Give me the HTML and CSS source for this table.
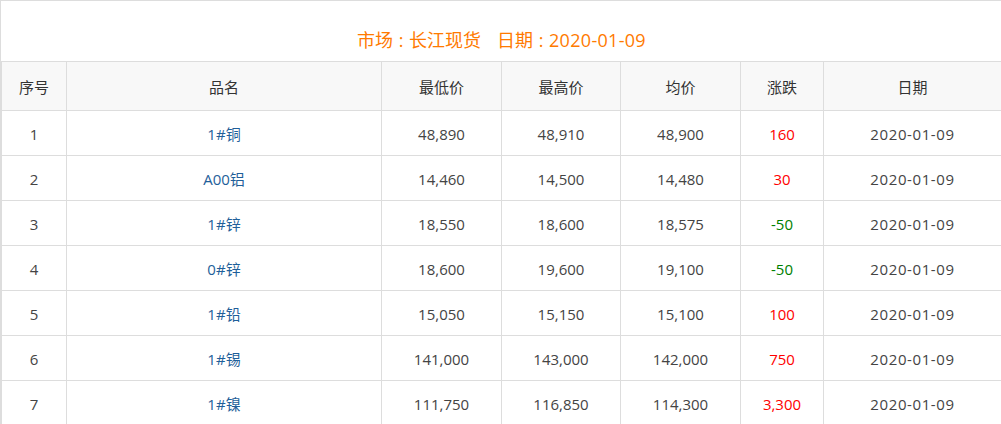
FILE: index.html
```html
<!DOCTYPE html>
<html lang="zh-CN">
<head>
<meta charset="utf-8">
<title>长江现货</title>
<link rel="stylesheet" href="styles.css">
</head>
<body>
<div class="board">
  <div class="title">市场<span class="colon">:</span>长江现货<span class="gap"></span>日期<span class="colon">:</span><span class="date">2020-01-09</span></div>
  <div class="grid">
    <div class="row head">
      <div class="cell">序号</div>
      <div class="cell">品名</div>
      <div class="cell">最低价</div>
      <div class="cell">最高价</div>
      <div class="cell">均价</div>
      <div class="cell">涨跌</div>
      <div class="cell">日期</div>
    </div>
    <div class="row">
      <div class="cell">1</div>
      <div class="cell name">1#铜</div>
      <div class="cell">48,890</div>
      <div class="cell">48,910</div>
      <div class="cell">48,900</div>
      <div class="cell up">160</div>
      <div class="cell date">2020-01-09</div>
    </div>
    <div class="row">
      <div class="cell">2</div>
      <div class="cell name">A00铝</div>
      <div class="cell">14,460</div>
      <div class="cell">14,500</div>
      <div class="cell">14,480</div>
      <div class="cell up">30</div>
      <div class="cell date">2020-01-09</div>
    </div>
    <div class="row">
      <div class="cell">3</div>
      <div class="cell name">1#锌</div>
      <div class="cell">18,550</div>
      <div class="cell">18,600</div>
      <div class="cell">18,575</div>
      <div class="cell down">-50</div>
      <div class="cell date">2020-01-09</div>
    </div>
    <div class="row">
      <div class="cell">4</div>
      <div class="cell name">0#锌</div>
      <div class="cell">18,600</div>
      <div class="cell">19,600</div>
      <div class="cell">19,100</div>
      <div class="cell down">-50</div>
      <div class="cell date">2020-01-09</div>
    </div>
    <div class="row">
      <div class="cell">5</div>
      <div class="cell name">1#铅</div>
      <div class="cell">15,050</div>
      <div class="cell">15,150</div>
      <div class="cell">15,100</div>
      <div class="cell up">100</div>
      <div class="cell date">2020-01-09</div>
    </div>
    <div class="row">
      <div class="cell">6</div>
      <div class="cell name">1#锡</div>
      <div class="cell">141,000</div>
      <div class="cell">143,000</div>
      <div class="cell">142,000</div>
      <div class="cell up">750</div>
      <div class="cell date">2020-01-09</div>
    </div>
    <div class="row">
      <div class="cell">7</div>
      <div class="cell name">1#镍</div>
      <div class="cell">111,750</div>
      <div class="cell">116,850</div>
      <div class="cell">114,300</div>
      <div class="cell up">3,300</div>
      <div class="cell date">2020-01-09</div>
    </div>
  </div>
</div>
</body>
</html>
```
FILE: styles.css
```css
html, body {
  margin: 0;
  padding: 0;
  overflow: hidden;
  background: #fff;
}
body {
  font-family: "Open Sans", "Noto Sans CJK SC", sans-serif;
  font-size: 15px;
  color: #444;
}
.board {
  width: 1010px;
  border-left: 1px solid #dddddd;
  border-top: 1px solid #dddddd;
}
.title {
  height: 60px;
  box-sizing: border-box;
  padding-top: 27px;
  padding-right: 9px;
  line-height: 24px;
  font-size: 18px;
  color: #ff7a00;
  text-align: center;
}
.title .colon {
  display: inline-block;
  width: 16px;
  text-align: center;
}
.title .gap {
  display: inline-block;
  width: 16px;
}
.title .date {
  letter-spacing: 0.3px;
}
.grid {
  border-left: 1px solid #dddddd;
  border-top: 1px solid #dddddd;
}
.row {
  display: grid;
  grid-template-columns: 65px 315px 120px 119px 120px 83px 178px;
  height: 45px;
  border-bottom: 1px solid #dddddd;
  box-sizing: border-box;
}
.row.head {
  height: 49px;
  background: #f8f8f8;
  color: #333;
}
.cell {
  border-right: 1px solid #dddddd;
  display: flex;
  align-items: center;
  justify-content: center;
  padding-top: 1px;
}
.cell.date {
  letter-spacing: 0.6px;
}
.name { color: #1f5f9a; }
.up { color: #ff0000; }
.down { color: #008000; }
```
